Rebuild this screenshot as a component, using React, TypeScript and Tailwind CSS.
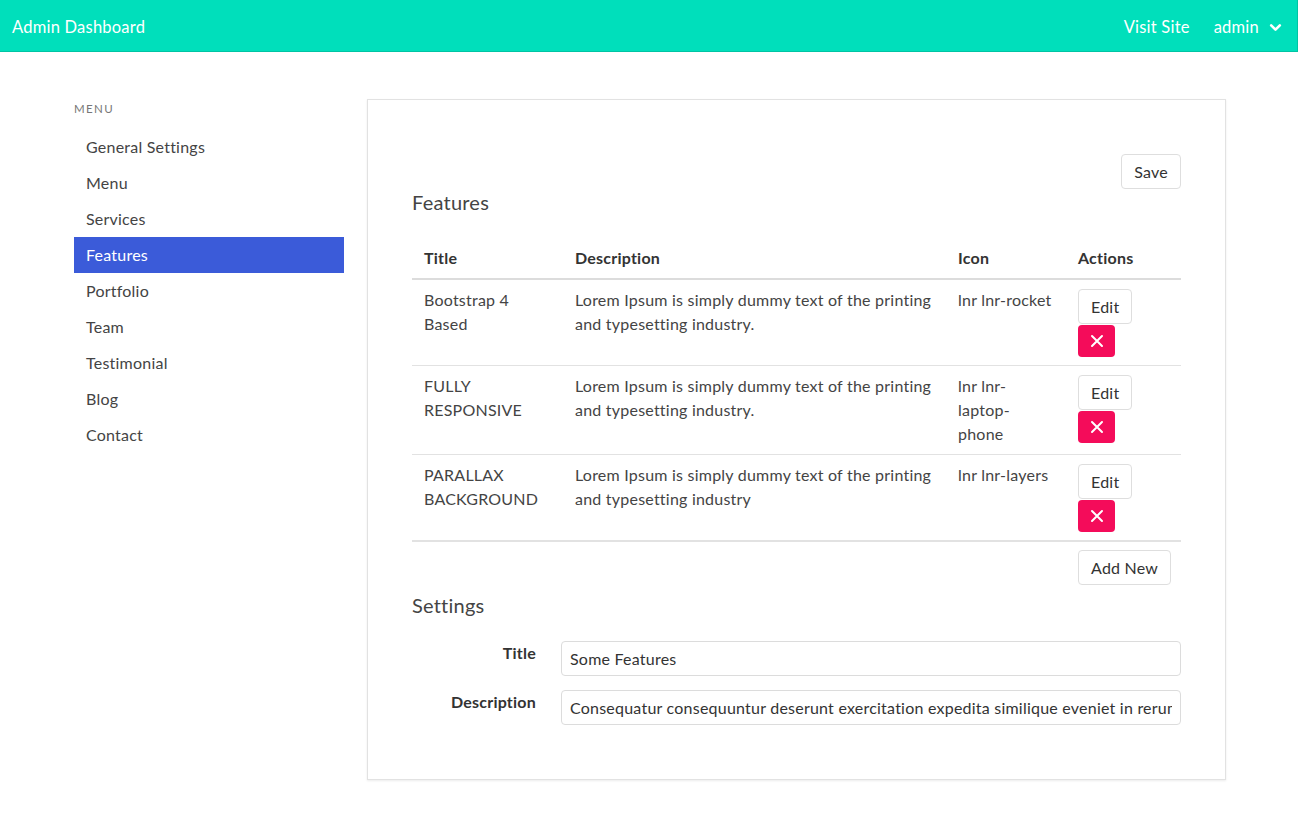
import React from 'react';

const font = { fontFamily: 'Lato, "Noto Sans", sans-serif', letterSpacing: '0.014em' };

const menuItems = ['General Settings', 'Menu', 'Services', 'Features', 'Portfolio', 'Team', 'Testimonial', 'Blog', 'Contact'];

const features = [
  { title: ['Bootstrap 4', 'Based'], desc: 'Lorem Ipsum is simply dummy text of the printing and typesetting industry.', icon: ['lnr lnr-rocket'] },
  { title: ['FULLY', 'RESPONSIVE'], desc: 'Lorem Ipsum is simply dummy text of the printing and typesetting industry.', icon: ['lnr lnr-', 'laptop-', 'phone'] },
  { title: ['PARALLAX', 'BACKGROUND'], desc: 'Lorem Ipsum is simply dummy text of the printing and typesetting industry', icon: ['lnr lnr-layers'] },
];

const Lines: React.FC<{ lines: string[] }> = ({ lines }) => (
  <>
    {lines.map((l, i) => (
      <div key={i}>{l}</div>
    ))}
  </>
);

const Navbar: React.FC = () => (
  <header className="h-[52px] bg-[#00dfbb] border-b border-r border-[#00c4a4] flex items-center justify-between pl-3 pr-[15px] pt-[3px] text-white">
    <span className="text-[16.5px]">Admin Dashboard</span>
    <div className="flex items-center text-[16.5px]">
      <span>Visit Site</span>
      <span className="ml-[24px]">admin</span>
      <svg className="ml-[10px]" width="13" height="13" viewBox="0 0 12 12" fill="none">
        <path d="M2 4 L6 8 L10 4" stroke="white" strokeWidth="2.4" strokeLinecap="round" strokeLinejoin="round" />
      </svg>
    </div>
  </header>
);

const Sidebar: React.FC = () => (
  <aside className="w-[270px] pt-[2px]">
    <div className="text-[11.5px] tracking-[0.12em] text-[#777] leading-4">MENU</div>
    <ul className="mt-[12px]">
      {menuItems.map((item) => (
        <li
          key={item}
          className={
            'h-[36px] flex items-center pl-3 text-[16px] ' +
            (item === 'Features' ? 'bg-[#3b5bd9] text-white' : 'text-[#444]')
          }
        >
          {item}
        </li>
      ))}
    </ul>
  </aside>
);

const Btn: React.FC<{ children: React.ReactNode; className?: string }> = ({ children, className }) => (
  <button className={'h-[35px] px-3 whitespace-nowrap border border-[#dedede] rounded-[4px] bg-white text-[16px] text-[#333] ' + (className || '')}>
    {children}
  </button>
);

const cols = 'grid grid-cols-[151px_383px_120px_116px]';

const FeaturesTable: React.FC = () => (
  <div className="text-[16px] text-[#444] leading-6">
    <div className={cols + ' border-b-2 border-[#dcdcdc] font-bold text-[#333] py-2'}>
      <div className="px-3">Title</div>
      <div className="px-3">Description</div>
      <div className="px-3">Icon</div>
      <div className="px-3">Actions</div>
    </div>
    {features.map((f, i) => (
      <div key={i} className={cols + ' border-b border-[#e2e2e2] ' + (i === 2 ? 'border-b-2 border-[#dcdcdc]' : '')}>
        <div className="px-3 py-2">
          <Lines lines={f.title} />
        </div>
        <div className="px-3 py-2">{f.desc}</div>
        <div className="px-3 py-2">
          <Lines lines={f.icon} />
        </div>
        <div className="px-3 pt-[9px] pb-2 flex flex-col items-start">
          <Btn>Edit</Btn>
          <button className="mt-px w-[37px] h-[32px] bg-[#f40c5a] rounded-[4px] flex items-center justify-center">
            <svg width="14" height="14" viewBox="0 0 14 14">
              <path d="M2 2 L12 12 M12 2 L2 12" stroke="white" strokeWidth="2" strokeLinecap="round" />
            </svg>
          </button>
        </div>
      </div>
    ))}
    <div className={cols + ' pt-2'}>
      <div />
      <div />
      <div />
      <div className="px-3">
        <Btn>Add New</Btn>
      </div>
    </div>
  </div>
);

const Field: React.FC<{ label: string; value: string }> = ({ label, value }) => (
  <div className="flex items-start">
    <label className="w-[124px] text-right font-bold text-[16px] text-[#333] leading-6">{label}</label>
    <input
      readOnly
      value={value}
      className="ml-[25px] flex-1 h-[35px] border border-[#dcdcdc] rounded-[4px] px-2 text-[16px] text-[#333] outline-none"
      style={font}
    />
  </div>
);

export default function App() {
  return (
    <div className="w-[1298px] min-h-[828px] bg-white" style={font}>
      <Navbar />
      <div className="flex pl-[74px] pt-[47px]">
        <Sidebar />
        <main className="ml-[23px] w-[859px] border border-[#e2e2e2] shadow-[0_1px_2px_rgba(0,0,0,0.08)] px-[44px] pt-[54px] pb-[54px]">
          <div className="flex justify-end">
            <Btn>Save</Btn>
          </div>
          <h2 className="text-[20px] leading-[28px] text-[#444] font-normal -mt-px">Features</h2>
          <div className="mt-[22px]">
            <FeaturesTable />
          </div>
          <h2 className="text-[20px] leading-[28px] text-[#444] font-normal mt-[6px]">Settings</h2>
          <div className="mt-[22px] flex flex-col gap-[14px]">
            <Field label="Title" value="Some Features" />
            <Field label="Description" value="Consequatur consequuntur deserunt exercitation expedita similique eveniet in rerum" />
          </div>
        </main>
      </div>
    </div>
  );
}
